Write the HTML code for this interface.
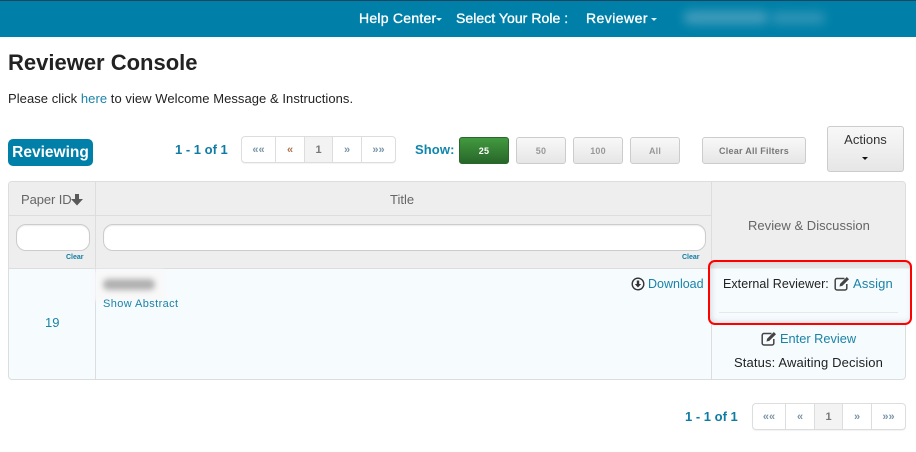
<!DOCTYPE html>
<html><head><meta charset="utf-8"><style>
html,body{margin:0;padding:0;background:#fff}
body{width:916px;height:452px;position:relative;overflow:hidden;font-family:"Liberation Sans",sans-serif;font-size:13px;color:#222}
.a{position:absolute;white-space:nowrap}
.nav{left:0;top:0;width:916px;height:37px;background:#0080a8;border-top:1px solid #1d4560;box-sizing:border-box}
.n{color:#fff;font-size:14px;top:10px;line-height:16px;-webkit-text-stroke:.35px #fff}
.car{width:0;height:0;border-left:3px solid transparent;border-right:3px solid transparent;border-top:3px solid #ddeef4}
.b{box-sizing:border-box;border:1px solid #ccc;border-radius:3px;background:linear-gradient(#f8f8f8,#e6e6e6);color:#999;font-weight:bold;font-size:9px;letter-spacing:.2px;text-align:center;height:27px;line-height:26px;top:137px}
.pg{box-sizing:border-box;border:1px solid #ddd;border-radius:4px;height:27px;display:flex;background:#fff;box-shadow:0 1px 1px rgba(0,0,0,.05)}
.pg span{display:block;box-sizing:border-box;border-right:1px solid #ddd;text-align:center;font-size:11px;font-weight:bold;line-height:26px;color:#7a96a8}
.pg span:last-child{border-right:0}
.pg .cur{background:#f3f3f3;color:#777}
.cnt{color:#0f7ca3;font-weight:bold;font-size:13px;line-height:16px}
.hd{color:#666;font-size:13px;line-height:16px}
.inp{box-sizing:border-box;background:#fff;border:1px solid #ccc;border-radius:10px;height:27px;top:224px;box-shadow:inset 0 1px 1px rgba(0,0,0,.08)}
.clr{color:#0f7ca3;font-size:7px;font-weight:bold;line-height:8px;top:254px}
.l{color:#1a83a8}
.t{font-size:13px;line-height:16px}
</style></head><body>

<div class="a nav"></div>
<div class="a n" style="left:359px;letter-spacing:.25px">Help Center</div>
<div class="a car" style="left:436px;top:18px"></div>
<div class="a n" style="left:456px;letter-spacing:.05px">Select Your Role :</div>
<div class="a n" style="left:586px;letter-spacing:.45px">Reviewer</div>
<div class="a car" style="left:651px;top:18px"></div>
<div class="a" style="left:684px;top:11px;width:84px;height:13px;background:#5fa9c4;border-radius:5px;filter:blur(5px);opacity:.7"></div>
<div class="a" style="left:771px;top:12px;width:54px;height:12px;background:#4fa2bf;border-radius:5px;filter:blur(5px);opacity:.6"></div>

<div class="a" style="left:8px;top:50px;font-size:22px;font-weight:bold;line-height:26px;color:#222">Reviewer Console</div>
<div class="a" style="left:8px;top:91px;font-size:13px;line-height:16px;letter-spacing:.05px;color:#222">Please click <span class="l">here</span> to view Welcome Message &amp; Instructions.</div>

<div class="a" style="left:8px;top:139px;width:85px;height:27px;background:#0080a8;border-radius:5px;color:#fff;font-size:15.500px;font-weight:bold;line-height:27px;text-align:center">Reviewing</div>

<div class="a cnt" style="left:175px;top:142px">1 - 1 of 1</div>
<div class="a pg" style="left:241px;top:136px;width:155px">
<span style="width:34px">««</span><span style="width:29px;color:#b0714f">«</span><span class="cur" style="width:28px">1</span><span style="width:29px">»</span><span style="flex:1">»»</span>
</div>

<div class="a cnt" style="left:415px;top:142px;color:#0f86ad;letter-spacing:.1px">Show:</div>
<div class="a b" style="left:459px;width:50px;background:linear-gradient(#429a3f,#28662a);border-color:#2a672b;color:#fff">25</div>
<div class="a b" style="left:516px;width:50px">50</div>
<div class="a b" style="left:573px;width:50px">100</div>
<div class="a b" style="left:630px;width:50px">All</div>
<div class="a b" style="left:702px;width:104px;color:#777;letter-spacing:.25px">Clear All Filters</div>
<div class="a b" style="left:827px;top:126px;width:77px;height:46px;color:#333;font-size:13px;font-weight:normal;letter-spacing:0;line-height:26px">Actions</div>
<div class="a car" style="left:862px;top:157px;border-top-color:#111"></div>

<!-- table -->
<div class="a" style="left:8px;top:181px;width:898px;height:199px;box-sizing:border-box;border:1px solid #ddd;border-radius:4px;background:#f6fbfe;overflow:hidden">
  <div class="a" style="left:0;top:0;width:896px;height:86px;background:#eee;border-bottom:1px solid #ddd"></div>
  <div class="a" style="left:0;top:33px;width:702px;height:1px;background:#ddd"></div>
  <div class="a" style="left:86px;top:0;width:1px;height:197px;background:#ddd"></div>
  <div class="a" style="left:702px;top:0;width:1px;height:197px;background:#ddd"></div>
</div>

<div class="a hd" style="left:21px;top:192px;letter-spacing:-.1px">Paper ID</div>
<svg class="a" style="left:70px;top:193px" width="14" height="13" viewBox="0 0 14 13"><path d="M5 1h4v5h4l-6 6.500L1 6h4z" fill="#5a5a5a"/></svg>
<div class="a hd" style="left:390px;top:192px">Title</div>
<div class="a hd" style="left:748px;top:218px;letter-spacing:.03px">Review &amp; Discussion</div>

<div class="a inp" style="left:16px;width:74px"></div>
<div class="a inp" style="left:103px;width:603px"></div>
<div class="a clr" style="left:66px">Clear</div>
<div class="a clr" style="left:682px">Clear</div>

<div class="a l t" style="left:45px;top:315px">19</div>
<div class="a" style="left:94px;top:270px;width:70px;height:31px;background:#f8f8f8;filter:blur(2px)"></div>
<div class="a" style="left:103px;top:279px;width:52px;height:11px;background:#b0b0b0;border-radius:5px;filter:blur(3px)"></div>
<div class="a l" style="left:103px;top:296px;font-size:11px;letter-spacing:.4px;line-height:16px">Show Abstract</div>

<svg class="a" style="left:631px;top:277px" width="14" height="14" viewBox="0 0 14 14"><circle cx="7" cy="7" r="5.800" fill="none" stroke="#333" stroke-width="1.400"/><path d="M5.800 3.500h2.400v3.500h2L7 10.500 3.800 7h2z" fill="#333"/></svg>
<div class="a l t" style="left:648px;top:276px;font-size:12.500px">Download</div>

<!-- red box -->
<div class="a" style="left:708px;top:260px;width:204px;height:65px;box-sizing:border-box;border:2px solid #f00;border-radius:7px;background:linear-gradient(#e4e6e6 0,#e4e6e6 6px,#f6fbfe 7px);box-shadow:inset 3px 0 5px rgba(0,0,0,.07),inset 0 -3px 5px rgba(0,0,0,.05)"></div>
<div class="a" style="left:719px;top:312px;width:179px;height:1px;background:#e8e8e8"></div>
<div class="a t" style="left:723px;top:276px;color:#222;font-size:12.500px;letter-spacing:.05px">External Reviewer:</div>
<svg class="a" style="left:834px;top:276px" width="16" height="15" viewBox="0 0 16 15"><path d="M10.500 2.500H3a1.800 1.800 0 0 0-1.800 1.800v8A1.800 1.800 0 0 0 3 14h8a1.800 1.800 0 0 0 1.800-1.800V8" fill="none" stroke="#444" stroke-width="1.500"/><path d="M5.500 10.500l.6-2.800L12.800 1l2.200 2.200-6.700 6.700z" fill="#444"/></svg>
<div class="a l t" style="left:853px;top:276px;letter-spacing:.15px">Assign</div>

<svg class="a" style="left:761px;top:331px" width="16" height="15" viewBox="0 0 16 15"><path d="M10.500 2.500H3a1.800 1.800 0 0 0-1.800 1.800v8A1.800 1.800 0 0 0 3 14h8a1.800 1.800 0 0 0 1.800-1.800V8" fill="none" stroke="#444" stroke-width="1.500"/><path d="M5.500 10.500l.6-2.800L12.800 1l2.200 2.200-6.700 6.700z" fill="#444"/></svg>
<div class="a l t" style="left:780px;top:331px;font-size:12.800px">Enter Review</div>
<div class="a t" style="left:734px;top:355px;color:#222;letter-spacing:.13px">Status: Awaiting Decision</div>

<div class="a cnt" style="left:685px;top:409px">1 - 1 of 1</div>
<div class="a pg" style="left:752px;top:403px;width:154px">
<span style="width:33px">««</span><span style="width:29px">«</span><span class="cur" style="width:28px">1</span><span style="width:29px">»</span><span style="flex:1">»»</span>
</div>

</body></html>
